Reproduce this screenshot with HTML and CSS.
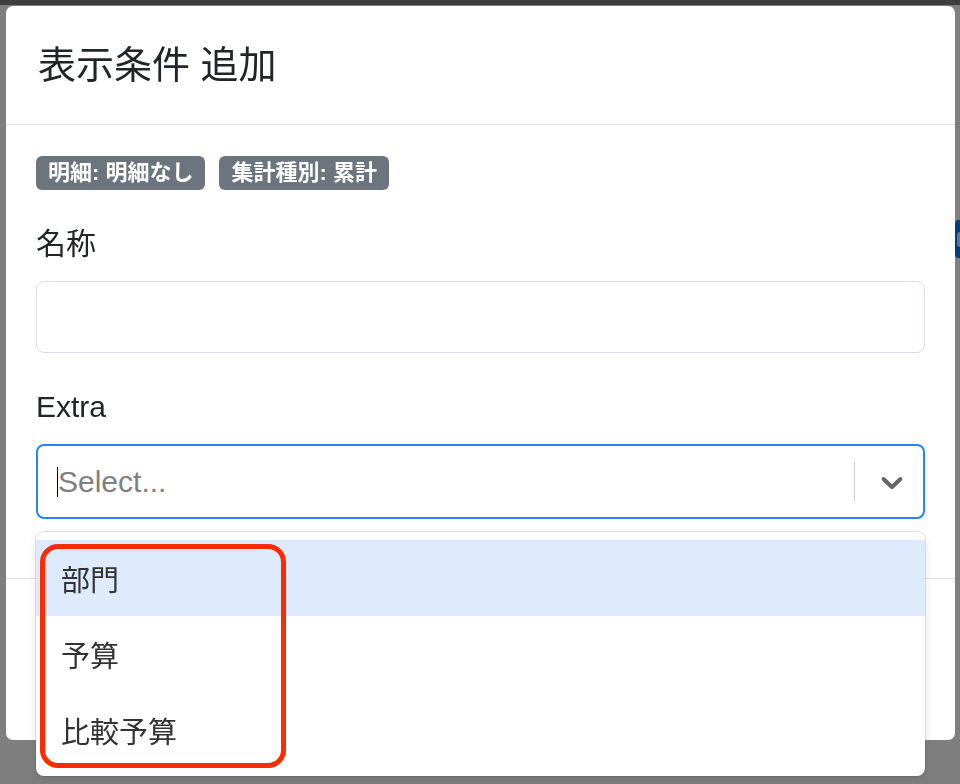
FILE: index.html
```html
<!DOCTYPE html>
<html lang="ja">
<head>
  <meta charset="UTF-8" />
  <meta name="viewport" content="width=device-width, initial-scale=1.0" />
  <title>表示条件 追加</title>
  <link rel="icon" href="data:,">
  <link rel="stylesheet" href="styles.css">
</head>
<body>
  <!-- Page behind the modal -->
  <div class="page">
    <div class="page-head"></div>
    <div class="page-main">
      <button class="page-btn" type="button"><span class="page-btn-badge"></span></button>
    </div>
  </div>
  <div class="backdrop"></div>

  <!-- Modal -->
  <div class="modal">
    <div class="modal-header">
      <h5 class="modal-title">表示条件 追加</h5>
    </div>

    <div class="modal-body">
      <div class="badges">
        <span class="badge">明細: 明細なし</span>
        <span class="badge">集計種別: 累計</span>
      </div>

      <div class="field">
        <label class="field-label" for="name">名称</label>
        <input class="text-input" type="text" id="name" name="name" />
      </div>

      <div class="field">
        <label class="field-label">Extra</label>
        <div class="select-wrap">
          <div class="select">
            <div class="select-value">
              <span class="caret"></span>
              <span class="placeholder">Select...</span>
            </div>
            <span class="select-sep"></span>
            <div class="select-arrow">
              <svg width="36" height="36" viewBox="0 0 20 20" aria-hidden="true">
                <path d="M4.516 7.548c0.436-0.446 1.043-0.481 1.576 0l3.908 3.747 3.908-3.747c0.533-0.481 1.141-0.446 1.574 0 0.436 0.445 0.408 1.197 0 1.615-0.406 0.418-4.695 4.502-4.695 4.502-0.217 0.223-0.502 0.335-0.787 0.335s-0.57-0.112-0.789-0.335c0 0-4.287-4.084-4.695-4.502s-0.436-1.17 0-1.615z"/>
              </svg>
            </div>
          </div>

          <div class="menu">
            <div class="option is-focused">部門</div>
            <div class="option">予算</div>
            <div class="option">比較予算</div>
          </div>
        </div>
      </div>
    </div>

    <div class="modal-footer"></div>
  </div>

  <!-- Red highlight drawn over the screenshot -->
  <div class="annotation"></div>
</body>
</html>
```

FILE: styles.css
```css
* {
  box-sizing: border-box;
}

body {
  font-family: "Liberation Sans", "Noto Sans CJK JP", sans-serif;
  margin: 0;
  padding: 0;
  width: 960px;
  height: 784px;
  overflow: hidden;
  position: relative;
  color: #212529;
  background: #fff;
}

/* page underneath */
.page {
  height: 784px;
  background: #fff;
  overflow: hidden;
}

.page-head {
  height: 5px;
  background: #7c7c7c;
}

.page-main {
  padding: 215px 0 0 955px;
}

.page-btn {
  display: block;
  width: 5px;
  height: 38px;
  padding: 0 0 0 2px;
  border: none;
  border-radius: 4px 0 0 4px;
  background-color: #007bff;
}

.page-btn-badge {
  display: block;
  width: 3px;
  height: 15px;
  border-radius: 3px 0 0 3px;
  background: #dfe6f0;
}

.backdrop {
  position: fixed;
  top: 0;
  left: 0;
  right: 0;
  bottom: 0;
  background: rgba(0, 0, 0, 0.5);
}

/* modal */
.modal {
  position: absolute;
  top: 6px;
  left: 6px;
  width: 949px;
  background-color: white;
  border-radius: 7px;
}

.modal-header {
  height: 119px;
  display: flex;
  align-items: center;
  padding: 0 32px;
  border-bottom: 1px solid #dee2e6;
}

.modal-title {
  margin: 0;
  font-size: 38px;
  font-weight: normal;
  line-height: 1;
  color: #212529;
}

.modal-body {
  padding: 31px 30px 59px;
}

.badges {
  display: flex;
  gap: 14px;
}

.badge {
  display: inline-block;
  height: 34px;
  padding: 0 12px;
  font-size: 22px;
  font-weight: bold;
  line-height: 34px;
  color: white;
  background-color: #6c757d;
  border-radius: 6px;
}

.field {
  margin-top: 31px;
}

.field-label {
  display: block;
  margin-bottom: 15px;
  font-size: 30px;
  line-height: 45px;
  color: #212529;
}

.text-input {
  display: block;
  width: 100%;
  height: 72px;
  padding: 0 18px;
  font: inherit;
  font-size: 30px;
  border: 1px solid #d9dee4;
  border-radius: 8px;
  outline: none;
}

/* react-select like control */
.select-wrap {
  position: relative;
}

.select {
  display: flex;
  align-items: center;
  height: 75px;
  border: 2px solid #2684ff;
  border-radius: 8px;
  background: white;
}

.select-value {
  flex: 1;
  display: flex;
  align-items: center;
  padding-left: 19px;
  font-size: 30px;
  color: #808080;
}

.caret {
  width: 1px;
  height: 30px;
  background: #000;
}

.select-sep {
  align-self: stretch;
  width: 1px;
  margin: 16px 0;
  background-color: #ccc;
}

.select-arrow {
  display: flex;
  padding: 0 13px 0 19px;
  fill: #666;
}

.menu {
  position: absolute;
  top: calc(100% + 13px);
  left: 0;
  right: 0;
  z-index: 2;
  padding: 8px 0;
  background: white;
  border-radius: 8px;
  box-shadow: 0 0 0 1px rgba(0, 0, 0, 0.1), 0 4px 11px rgba(0, 0, 0, 0.1);
}

.option {
  display: flex;
  align-items: center;
  height: 76px;
  padding: 0 25px;
  font-size: 29px;
  color: #333;
}

.option.is-focused {
  background-color: #deebff;
}

.modal-footer {
  height: 162px;
  border-top: 1px solid #dee2e6;
}

.annotation {
  position: absolute;
  top: 544px;
  left: 40px;
  z-index: 3;
  width: 246px;
  height: 224px;
  border: 5px solid #ff2a00;
  border-radius: 18px;
}
```
